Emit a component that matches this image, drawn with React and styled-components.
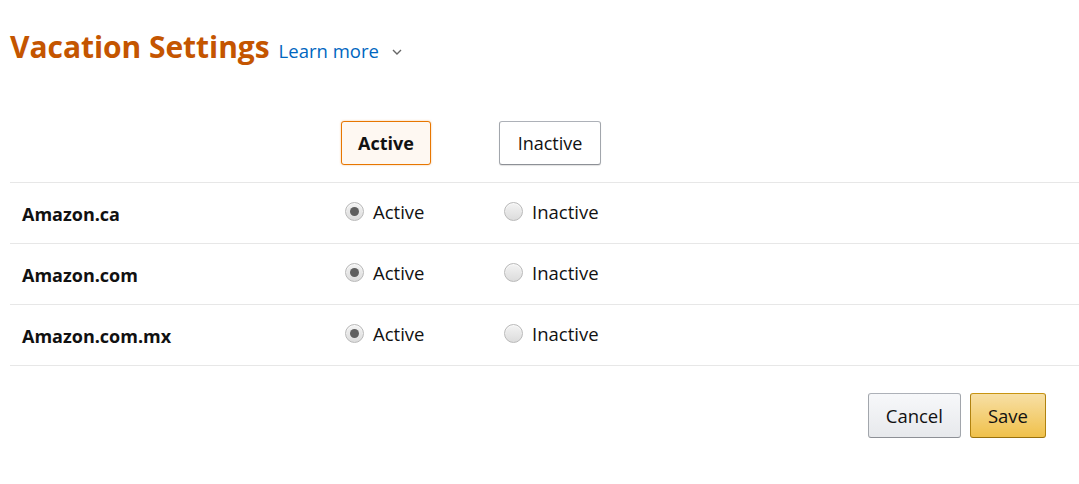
import React, { useState } from "react";
import styled, { createGlobalStyle, css } from "styled-components";

const Global = createGlobalStyle`
  html, body { margin: 0; padding: 0; background: #fff; }
  body { font-family: "Open Sans", "Noto Sans", sans-serif; color: #111; }
  * { box-sizing: border-box; }
`;

const Page = styled.div`
  padding: 26px 0 0 10px;
  width: 1079px;
`;

const Header = styled.div`
  display: flex;
  align-items: baseline;
  gap: 9px;
`;

const Title = styled.h1`
  margin: 0;
  font-size: 30px;
  font-weight: 700;
  color: #c45500;
  letter-spacing: -0.05px;
`;

const LearnMore = styled.a`
  display: inline-flex;
  align-items: center;
  gap: 13px;
  font-size: 18.5px;
  color: #0066c0;
  text-decoration: none;
  cursor: pointer;
`;

const Chevron = styled.svg`
  width: 10px;
  height: 8px;
  transform: translateY(1px);
`;

const Table = styled.div`
  margin-top: 54px;
  display: grid;
  grid-template-columns: 331px 158px 1fr;
`;

const HeadRow = styled.div`
  display: contents;
`;

const HeadCell = styled.div`
  border-bottom: 1px solid #e7e7e7;
  height: 62px;
`;

const ToggleButton = styled.button`
  height: 44px;
  font-family: inherit;
  font-size: 18px;
  border-radius: 3px;
  cursor: pointer;
  color: #111;
  ${(p) =>
    p.$selected
      ? css`
          font-weight: 700;
          width: 90px;
          padding: 0;
          background: #fef8f2;
          border: 1px solid #e77600;
          box-shadow: 0 0 2px rgba(228, 121, 17, 0.5);
        `
      : css`
          font-weight: 400;
          width: 102px;
          padding: 0;
          background: #fff;
          border: 1px solid #adb1b8;
          border-color: #adb1b8 #a2a6ac #8d9096;
          box-shadow: 0 1px 1px rgba(0, 0, 0, 0.12);
        `}
`;

const Cell = styled.div`
  height: 61px;
  display: flex;
  align-items: center;
  border-bottom: 1px solid #e7e7e7;
  padding-left: ${(p) => p.$pad || 0}px;
`;

const SiteName = styled.span`
  font-size: 18px;
  font-weight: 700;
  padding-top: 1px;
`;

const RadioLabel = styled.label`
  display: inline-flex;
  align-items: center;
  gap: 9px;
  font-size: 18.5px;
  cursor: pointer;
  margin-top: -3px;
`;

const RadioDot = styled.span`
  width: 19px;
  height: 19px;
  border-radius: 50%;
  border: 1px solid #b9b9b9;
  background: linear-gradient(#f3f3f3, #dcdcdc);
  display: inline-flex;
  align-items: center;
  justify-content: center;
  box-shadow: inset 0 1px 1px rgba(255, 255, 255, 0.7);
  &::after {
    content: "";
    width: 9px;
    height: 9px;
    border-radius: 50%;
    background: ${(p) => (p.$on ? "#5f5f5f" : "transparent")};
  }
`;

const Footer = styled.div`
  display: flex;
  justify-content: flex-end;
  gap: 9px;
  padding: 27px 33px 0 0;
`;

const ActionButton = styled.button`
  height: 45px;
  padding: 0 17px;
  font-family: inherit;
  font-size: 18.5px;
  color: #111;
  border-radius: 3px;
  cursor: pointer;
  ${(p) =>
    p.$primary
      ? css`
          background: linear-gradient(#f7dfa5, #f0c14b);
          border: 1px solid #a88734;
          border-color: #c89411 #b0820f #99710d;
        `
      : css`
          background: linear-gradient(#f7f8fa, #e7e9ec);
          border: 1px solid #adb1b8;
          border-color: #adb1b8 #a2a6ac #8d9096;
        `}
`;

const sites = ["Amazon.ca", "Amazon.com", "Amazon.com.mx"];

export default function App() {
  const [state, setState] = useState({
    "Amazon.ca": true,
    "Amazon.com": true,
    "Amazon.com.mx": true,
  });
  return (
    <>
      <Global />
      <Page>
        <Header>
          <Title>Vacation Settings</Title>
          <LearnMore>
            Learn more
            <Chevron viewBox="0 0 10 8">
              <path d="M1 2 L5 6 L9 2" fill="none" stroke="#666" strokeWidth="1.4" />
            </Chevron>
          </LearnMore>
        </Header>
        <Table>
          <HeadRow>
            <HeadCell />
            <HeadCell>
              <ToggleButton $selected>Active</ToggleButton>
            </HeadCell>
            <HeadCell>
              <ToggleButton>Inactive</ToggleButton>
            </HeadCell>
          </HeadRow>
          {sites.map((s) => (
            <React.Fragment key={s}>
              <Cell $pad={12}>
                <SiteName>{s}</SiteName>
              </Cell>
              <Cell $pad={4}>
                <RadioLabel onClick={() => setState({ ...state, [s]: true })}>
                  <RadioDot $on={state[s]} />
                  Active
                </RadioLabel>
              </Cell>
              <Cell $pad={5}>
                <RadioLabel onClick={() => setState({ ...state, [s]: false })}>
                  <RadioDot $on={!state[s]} />
                  Inactive
                </RadioLabel>
              </Cell>
            </React.Fragment>
          ))}
        </Table>
        <Footer>
          <ActionButton>Cancel</ActionButton>
          <ActionButton $primary>Save</ActionButton>
        </Footer>
      </Page>
    </>
  );
}
